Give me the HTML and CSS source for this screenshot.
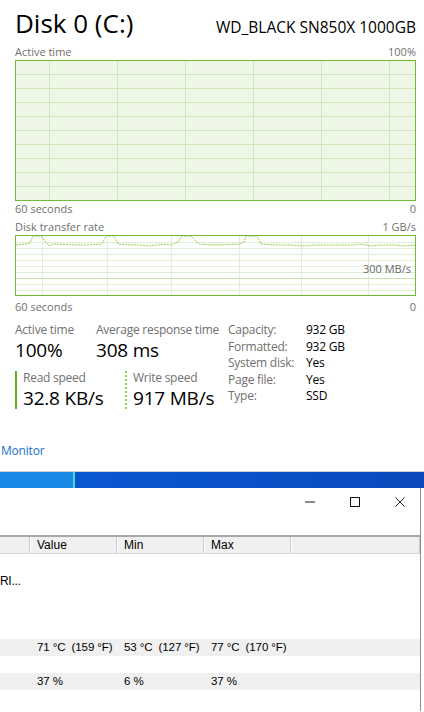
FILE: index.html
```html
<!DOCTYPE html>
<html>
<head>
<meta charset="utf-8">
<link rel="stylesheet" href="styles.css">
</head>
<body>
<div class="tm">
  <div class="head">
    <span class="title">Disk 0 (C:)</span>
    <span class="model">WD_BLACK SN850X 1000GB</span>
  </div>
  <div class="axis"><span>Active time</span><span>100%</span></div>
  <svg class="graph g1" width="401" height="141" viewBox="0 0 401 141">
    <rect x="0.5" y="0.5" width="400" height="140" class="g1-bg"/>
    <g class="grid">
      <line x1="1" y1="14.5" x2="400" y2="14.5"/>
      <line x1="1" y1="28.5" x2="400" y2="28.5"/>
      <line x1="1" y1="42.5" x2="400" y2="42.5"/>
      <line x1="1" y1="56.5" x2="400" y2="56.5"/>
      <line x1="1" y1="70.5" x2="400" y2="70.5"/>
      <line x1="1" y1="84.5" x2="400" y2="84.5"/>
      <line x1="1" y1="98.5" x2="400" y2="98.5"/>
      <line x1="1" y1="112.5" x2="400" y2="112.5"/>
      <line x1="1" y1="126.5" x2="400" y2="126.5"/>
      <line x1="34.5" y1="1" x2="34.5" y2="140"/>
      <line x1="102.5" y1="1" x2="102.5" y2="140"/>
      <line x1="170.5" y1="1" x2="170.5" y2="140"/>
      <line x1="238.5" y1="1" x2="238.5" y2="140"/>
      <line x1="306.5" y1="1" x2="306.5" y2="140"/>
      <line x1="374.5" y1="1" x2="374.5" y2="140"/>
    </g>
    <rect x="0.5" y="0.5" width="400" height="140" class="frame"/>
  </svg>
  <div class="axis"><span>60 seconds</span><span>0</span></div>
  <div class="axis axis-top"><span>Disk transfer rate</span><span>1 GB/s</span></div>
  <div class="graph2">
    <svg class="graph" width="401" height="61" viewBox="0 0 401 61">
      <rect x="0.5" y="0.5" width="400" height="60" class="g2-bg"/>
      <g class="grid2">
        <line x1="1" y1="7.5" x2="400" y2="7.5"/>
        <line x1="1" y1="13.5" x2="400" y2="13.5"/>
        <line x1="1" y1="19.5" x2="400" y2="19.5"/>
        <line x1="1" y1="25.5" x2="400" y2="25.5"/>
        <line x1="1" y1="31.5" x2="400" y2="31.5"/>
        <line x1="1" y1="37.5" x2="400" y2="37.5"/>
        <line x1="1" y1="49.5" x2="400" y2="49.5"/>
        <line x1="1" y1="55.5" x2="400" y2="55.5"/>
        <line x1="27.5" y1="1" x2="27.5" y2="60"/>
        <line x1="92.5" y1="1" x2="92.5" y2="60"/>
        <line x1="156.5" y1="1" x2="156.5" y2="60"/>
        <line x1="224.5" y1="1" x2="224.5" y2="60"/>
        <line x1="286.5" y1="1" x2="286.5" y2="60"/>
        <line x1="353.5" y1="1" x2="353.5" y2="60"/>
      </g>
      <line x1="1" y1="43.5" x2="400" y2="43.5" class="mark-line"/>
      <polyline class="data" points="1,10 6,9.5 12,9 15,8 18,1 26,1 34,11 38,9 50,9.5 62,10 72,10 80,9.5 87,9 91,1 99,1 103,9 115,10 125,10 135,11 140,10 150,9.5 156,10 163,7 167,1 176,1 184,9 195,10 205,10 215,9.5 225,9 229,7 231,1 242,1 246,9 260,10 275,10 290,11 300,10 320,10 340,10 345,9 355,11 365,10 380,10 390,11 400,10"/>
      <rect x="0.5" y="0.5" width="400" height="60" class="frame"/>
    </svg>
    <span class="mark">300 MB/s</span>
  </div>
  <div class="axis axis-bottom"><span>60 seconds</span><span>0</span></div>

  <div class="stats">
    <div class="left">
      <div class="toprow">
        <div class="stat first">
          <div class="lab">Active time</div>
          <div class="val">100%</div>
        </div>
        <div class="stat">
          <div class="lab">Average response time</div>
          <div class="val">308 ms</div>
        </div>
      </div>
      <div class="speedrow">
        <div class="speed read">
          <div class="lab slab">Read speed</div>
          <div class="val sval">32.8 KB/s</div>
        </div>
        <div class="speed write">
          <div class="lab slab">Write speed</div>
          <div class="val sval">917 MB/s</div>
        </div>
      </div>
    </div>
    <div class="props">
      <span class="pk">Capacity:</span><span class="pv">932 GB</span>
      <span class="pk">Formatted:</span><span class="pv">932 GB</span>
      <span class="pk">System disk:</span><span class="pv">Yes</span>
      <span class="pk">Page file:</span><span class="pv">Yes</span>
      <span class="pk">Type:</span><span class="pv">SSD</span>
    </div>
  </div>
</div>

<div class="link">Monitor</div>

<div class="taskbar">
  <div class="tb-active"></div>
  <div class="tb-rest"></div>
</div>

<div class="win">
  <div class="titlebar">
    <svg class="ctl" width="10" height="10" viewBox="0 0 10 10"><rect x="0" y="4" width="10" height="2" class="min"/></svg>
    <svg class="ctl" width="10" height="10" viewBox="0 0 10 10"><rect x="0.5" y="0.5" width="9" height="9" class="max"/></svg>
    <svg class="ctl" width="10" height="10" viewBox="0 0 10 10"><path d="M0.5 0.5 L9.5 9.5 M9.5 0.5 L0.5 9.5" class="cls"/></svg>
  </div>
  <div class="thead">
    <div class="th c0"></div>
    <div class="th c1">Value</div>
    <div class="th c2">Min</div>
    <div class="th c3">Max</div>
    <div class="th c4"></div>
  </div>
  <div class="row"><div class="td c0"></div><div class="td c1"></div><div class="td c2"></div><div class="td c3"></div></div>
  <div class="row"><div class="td c0 name">RI...</div><div class="td c1"></div><div class="td c2"></div><div class="td c3"></div></div>
  <div class="row"><div class="td c0"></div><div class="td c1"></div><div class="td c2"></div><div class="td c3"></div></div>
  <div class="row"><div class="td c0"></div><div class="td c1"></div><div class="td c2"></div><div class="td c3"></div></div>
  <div class="row"><div class="td c0"></div><div class="td c1"></div><div class="td c2"></div><div class="td c3"></div></div>
  <div class="row alt"><div class="td c0"></div><div class="td c1">71 °C  (159 °F)</div><div class="td c2">53 °C  (127 °F)</div><div class="td c3">77 °C  (170 °F)</div></div>
  <div class="row"><div class="td c0"></div><div class="td c1"></div><div class="td c2"></div><div class="td c3"></div></div>
  <div class="row alt"><div class="td c0"></div><div class="td c1">37 %</div><div class="td c2">6 %</div><div class="td c3">37 %</div></div>
  <div class="row"><div class="td c0"></div><div class="td c1"></div><div class="td c2"></div><div class="td c3"></div></div>
</div>
</body>
</html>
```
FILE: styles.css
```css
* { box-sizing: border-box; }
html, body { margin: 0; padding: 0; background: #fff; }
body {
  width: 424px;
  height: 712px;
  overflow: hidden;
  font-family: "Open Sans", "Noto Sans", sans-serif;
  color: #000;
}

.tm { padding-left: 15px; width: 416px; }

.head {
  display: flex;
  justify-content: space-between;
  align-items: baseline;
  padding-top: 6px;
  height: 44px;
}
.title { font-size: 26px; line-height: 34px; }
.model { font-size: 15.5px; }

.axis {
  display: flex;
  justify-content: space-between;
  font-size: 11px;
  line-height: 15px;
  height: 15px;
  color: #707070;
}
.axis-top { margin-top: 3px; }
.axis-bottom { margin-top: 3px; }

.graph { display: block; margin-top: 1px; }
.g1-bg { fill: #eef6e6; stroke: none; }
.g2-bg { fill: #fff; stroke: none; }
.grid line { stroke: #cfe6bd; stroke-width: 1; }
.grid2 line { stroke: #e0eed5; stroke-width: 1; }
.mark-line { stroke: #c6e2b0; stroke-width: 1; }
.frame { fill: none; stroke: #6fb93b; stroke-width: 1; }
.data { fill: none; stroke: #8ccf4f; stroke-width: 1; stroke-dasharray: 2 1; }

.graph2 { position: relative; }
.mark {
  position: absolute;
  right: 5px;
  top: 26px;
  font-size: 11px;
  line-height: 15px;
  color: #6a6a6a;
}

.stats { display: flex; align-items: flex-start; margin-top: 8px; height: 90px; }
.left { width: 213px; }
.toprow { display: flex; }
.stat.first { width: 81px; }
.lab { font-size: 12px; line-height: 16px; color: #707070; letter-spacing: -0.25px; white-space: nowrap; }
.val { font-size: 19px; line-height: 24px; margin-top: 0; letter-spacing: -0.2px; white-space: nowrap; }

.speedrow { display: flex; margin-top: 9px; }
.speed { padding-left: 6px; height: 38px; }
.read { width: 110px; border-left: 2px solid #5fae1f; }
.write { border-left: 2px dotted #8bd046; }
.slab { line-height: 14px; }
.sval { line-height: 22px; margin-top: 2px; }

.props {
  display: grid;
  grid-template-columns: 78px auto;
  align-content: start;
  font-size: 12px;
  line-height: 16.6px;
  letter-spacing: -0.25px;
}
.pk { color: #707070; }
.pv { color: #000; }

.link {
  margin-top: 31px;
  padding-left: 1px;
  font-size: 12px;
  line-height: 16px;
  height: 16px;
  color: #1a6fd0;
  letter-spacing: -0.2px;
}

.taskbar {
  margin-top: 12px;
  height: 17px;
  display: flex;
  border-top: 1px solid #d0d0d0;
}
.tb-active {
  width: 75px;
  background: #1b8ae6;
  border-right: 2px solid #4fd8d2;
}
.tb-rest {
  flex: 1;
  background: linear-gradient(90deg, #0b57d2, #0a4fc6 60%, #0a49bd);
}

.win {
  width: 421px;
  height: 223px;
  border-right: 1px solid #8f8f8f;
  background: #fff;
  font-family: "Liberation Sans", Arial, sans-serif;
  font-size: 12px;
}
.titlebar {
  display: flex;
  justify-content: flex-end;
  gap: 35px;
  padding: 9px 15px 0 0;
  height: 47px;
}
.ctl { display: block; }
.min { fill: #8a8a8a; }
.max { fill: none; stroke: #111; stroke-width: 1; }
.cls { fill: none; stroke: #222; stroke-width: 1; }

.thead {
  display: flex;
  height: 19px;
  border-top: 2px solid #a8a8a8;
  border-bottom: 1px solid #d6d6d6;
  background: #f0f0f0;
  line-height: 16px;
}
.th { border-right: 1px solid #c9c9c9; border-left: 1px solid #fff; padding-left: 6px; white-space: pre; }
.th.c0 { border-left: none; }
.c0 { width: 30px; }
.c1 { width: 87px; }
.c2 { width: 87px; }
.c3 { width: 87px; }
.th.c4 { flex: 1; }

.row { display: flex; height: 17px; line-height: 17px; }
.row.alt { background: #f0f0f0; }
.td { padding-left: 7px; white-space: pre; overflow: hidden; font-size: 11.5px; letter-spacing: -0.1px; }
.td.c0 { padding-left: 0; }
.name { font-size: 12px; letter-spacing: -0.3px; padding-top: 2px; }
```
